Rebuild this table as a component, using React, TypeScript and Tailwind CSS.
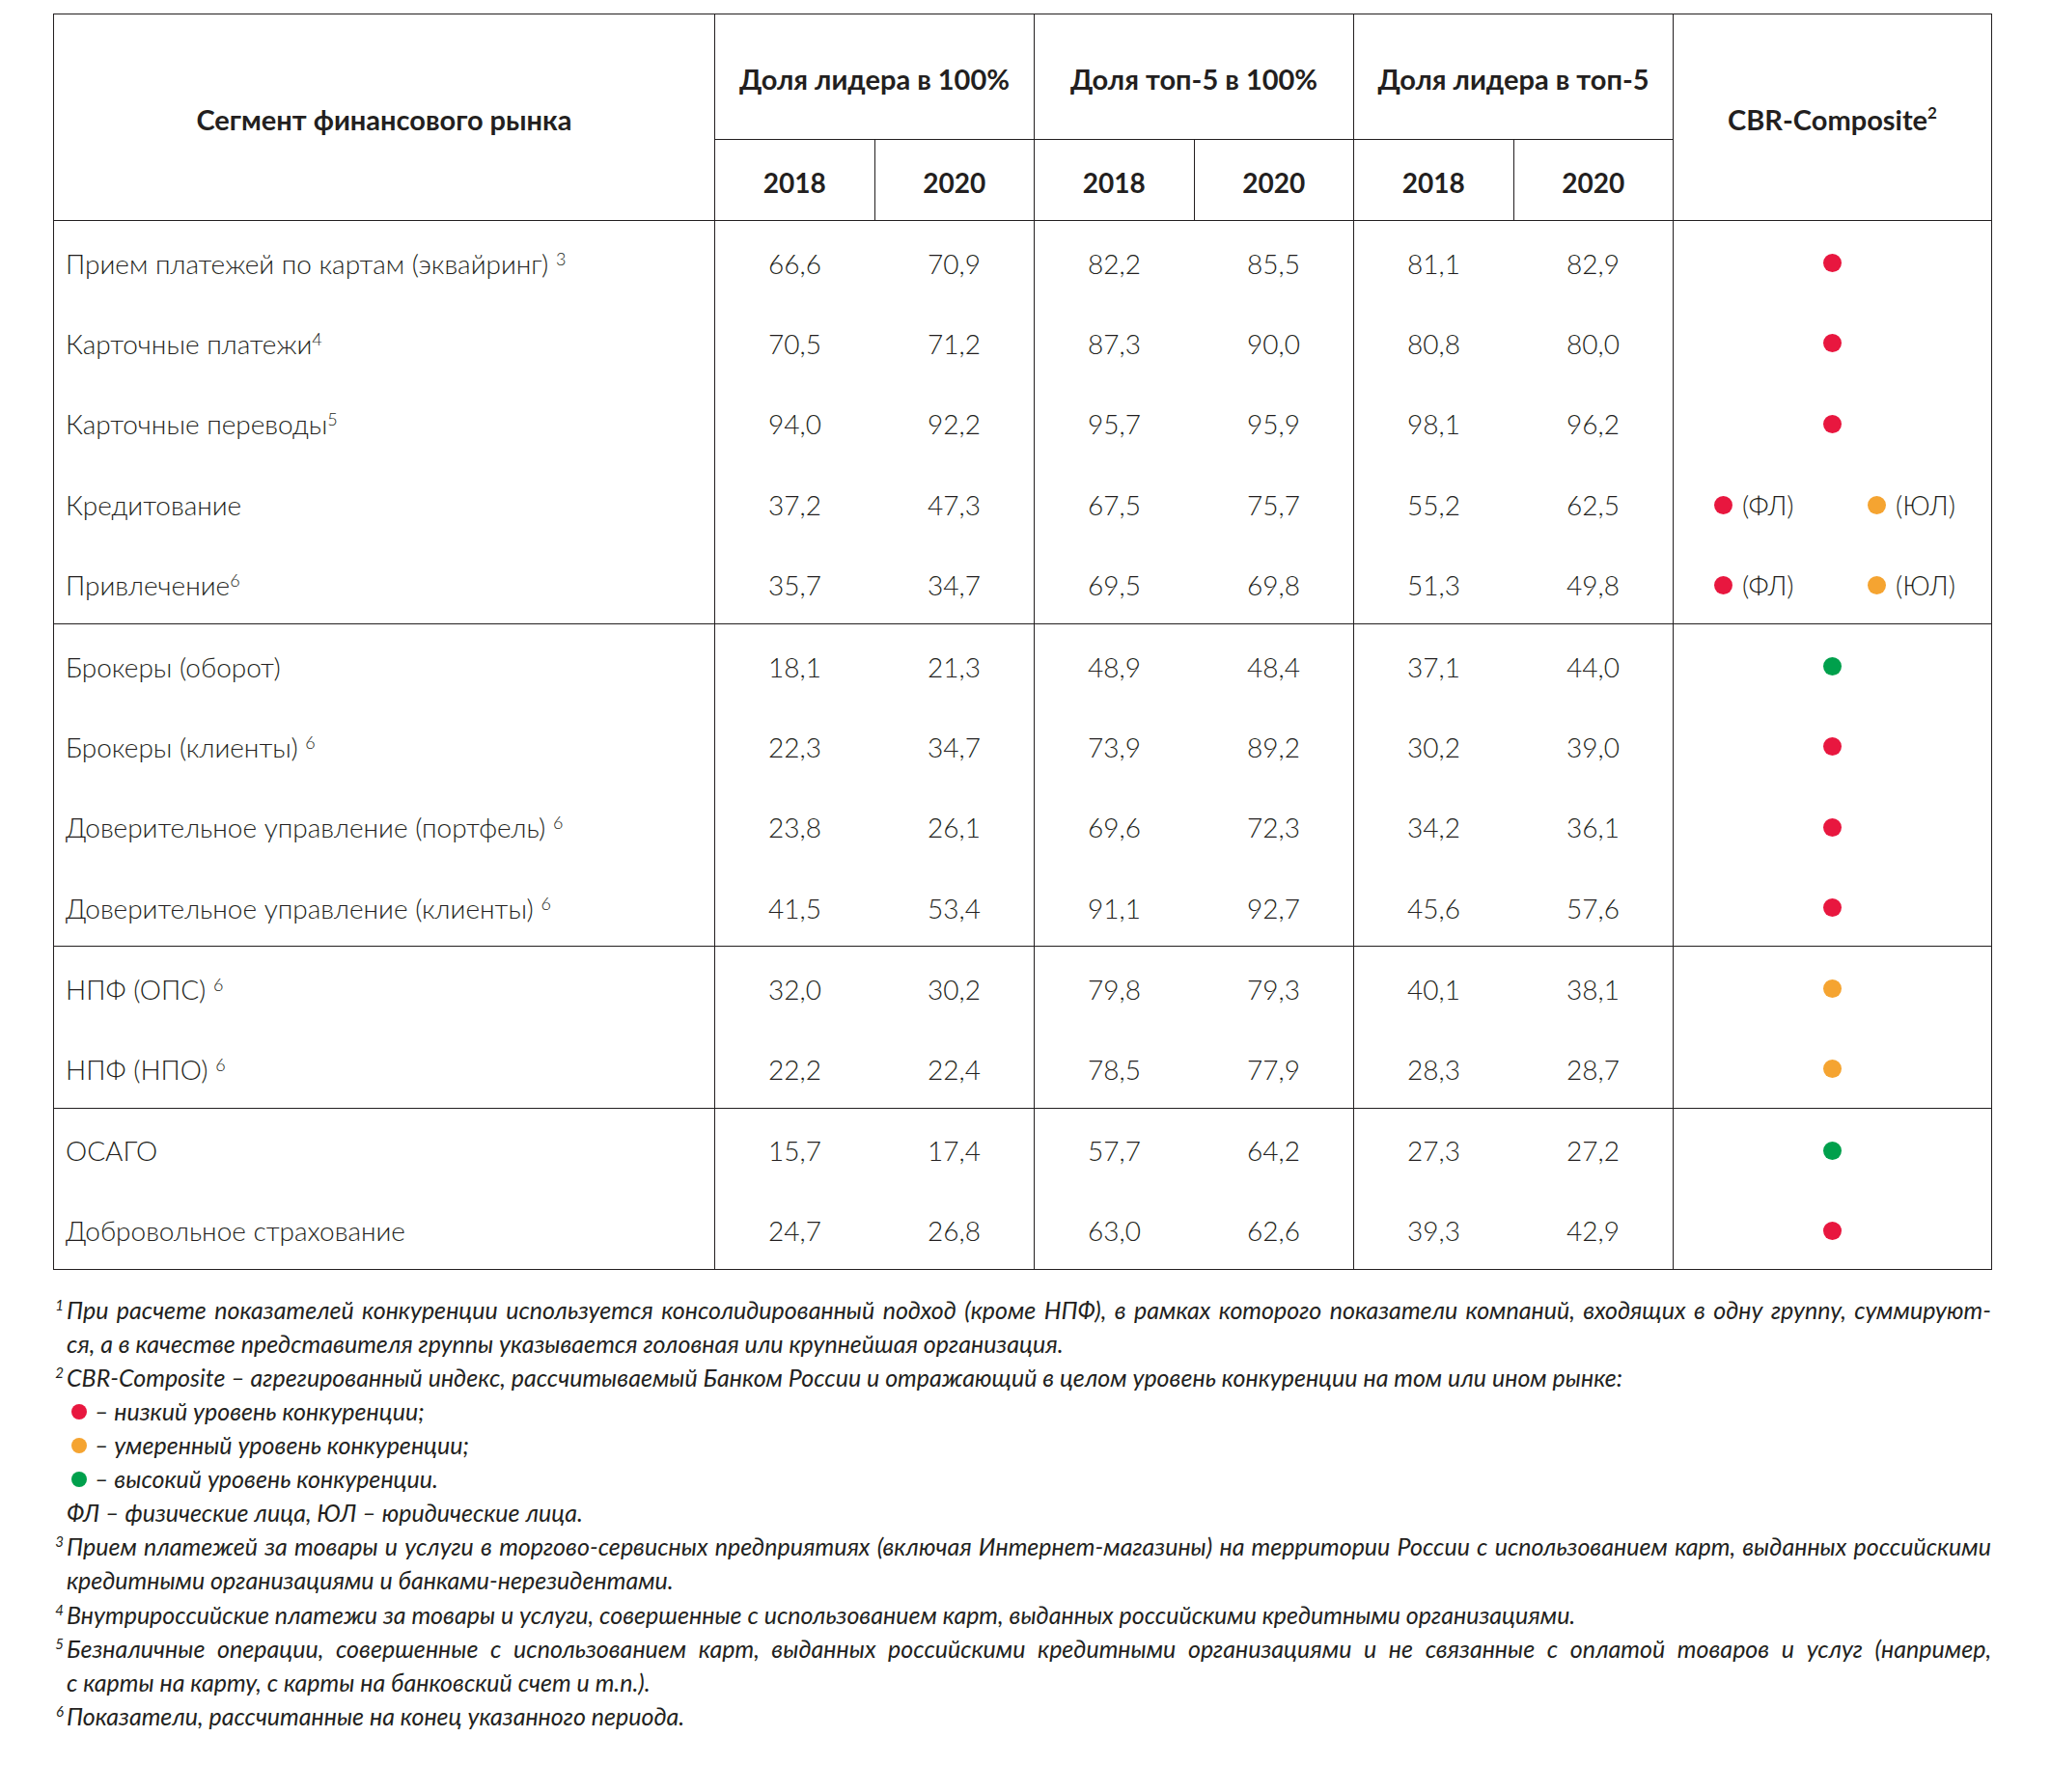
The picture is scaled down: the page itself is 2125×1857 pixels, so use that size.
import React from "react";

type Comp = "red" | "orange" | "green" | "split";

type Row = {
  label: string;
  sup?: string;
  supSpace?: boolean;
  v: string[];
  c: Comp;
};

const groups: Row[][] = [
  [
    { label: "Прием платежей по картам (эквайринг)", sup: "3", supSpace: true, v: ["66,6", "70,9", "82,2", "85,5", "81,1", "82,9"], c: "red" },
    { label: "Карточные платежи", sup: "4", v: ["70,5", "71,2", "87,3", "90,0", "80,8", "80,0"], c: "red" },
    { label: "Карточные переводы", sup: "5", v: ["94,0", "92,2", "95,7", "95,9", "98,1", "96,2"], c: "red" },
    { label: "Кредитование", v: ["37,2", "47,3", "67,5", "75,7", "55,2", "62,5"], c: "split" },
    { label: "Привлечение", sup: "6", v: ["35,7", "34,7", "69,5", "69,8", "51,3", "49,8"], c: "split" },
  ],
  [
    { label: "Брокеры (оборот)", v: ["18,1", "21,3", "48,9", "48,4", "37,1", "44,0"], c: "green" },
    { label: "Брокеры (клиенты)", sup: "6", supSpace: true, v: ["22,3", "34,7", "73,9", "89,2", "30,2", "39,0"], c: "red" },
    { label: "Доверительное управление (портфель)", sup: "6", supSpace: true, v: ["23,8", "26,1", "69,6", "72,3", "34,2", "36,1"], c: "red" },
    { label: "Доверительное управление (клиенты)", sup: "6", supSpace: true, v: ["41,5", "53,4", "91,1", "92,7", "45,6", "57,6"], c: "red" },
  ],
  [
    { label: "НПФ (ОПС)", sup: "6", supSpace: true, v: ["32,0", "30,2", "79,8", "79,3", "40,1", "38,1"], c: "orange" },
    { label: "НПФ (НПО)", sup: "6", supSpace: true, v: ["22,2", "22,4", "78,5", "77,9", "28,3", "28,7"], c: "orange" },
  ],
  [
    { label: "ОСАГО", v: ["15,7", "17,4", "57,7", "64,2", "27,3", "27,2"], c: "green" },
    { label: "Добровольное страхование", v: ["24,7", "26,8", "63,0", "62,6", "39,3", "42,9"], c: "red" },
  ],
];

function Dot({ color, small }: { color: "red" | "orange" | "green"; small?: boolean }) {
  const bg = color === "red" ? "bg-[#e8173f]" : color === "orange" ? "bg-[#f5a431]" : "bg-[#00a04c]";
  const size = small ? "w-[16px] h-[16px]" : "w-[19px] h-[19px]";
  return <span className={`inline-block shrink-0 rounded-full ${size} ${bg}`} />;
}

function CompCell({ c }: { c: Comp }) {
  if (c === "split") {
    return (
      <div className="flex items-center justify-between pl-[42px] pr-[37px]">
        <span className="flex items-center gap-[10px]">
          <Dot color="red" />
          <span>(ФЛ)</span>
        </span>
        <span className="flex items-center gap-[10px]">
          <Dot color="orange" />
          <span>(ЮЛ)</span>
        </span>
      </div>
    );
  }
  return (
    <div className="flex items-center justify-center">
      <Dot color={c} />
    </div>
  );
}

const B = "border-[#231f20]";

function FootLine({ sup, children, justify }: { sup?: string; children: React.ReactNode; justify?: boolean }) {
  return (
    <div className="flex h-[35.1px] items-center">
      <span className="w-[14px] shrink-0 self-start pr-[3px] text-right">
        {sup ? <span className="relative top-[-9px] text-[15px] leading-none">{sup}</span> : null}
      </span>
      <span className={`flex-1 ${justify ? "text-justify [text-align-last:justify]" : ""}`}>{children}</span>
    </div>
  );
}

export default function App() {
  return (
    <div className="min-h-[1857px] w-[2125px] bg-white pl-[55px] pt-[14px] text-[#231f20] [font-family:Lato,'Noto_Sans',sans-serif]">
      <table className={`w-[2008px] table-fixed border-collapse border ${B} text-[28px] font-light`}>
        <colgroup>
          <col className="w-[685px]" />
          <col className="w-[165.5px]" />
          <col className="w-[165.5px]" />
          <col className="w-[165.5px]" />
          <col className="w-[165.5px]" />
          <col className="w-[165.5px]" />
          <col className="w-[165.5px]" />
          <col className="w-[330px]" />
        </colgroup>
        <thead>
          <tr className="h-[130px]">
            <th rowSpan={2} className={`border ${B} pt-[4px] text-center text-[29px] font-bold`}>
              Сегмент финансового рынка
            </th>
            <th colSpan={2} className={`border ${B} pt-[4px] text-center text-[29px] font-bold`}>
              Доля лидера в 100%
            </th>
            <th colSpan={2} className={`border ${B} pt-[4px] text-center text-[29px] font-bold`}>
              Доля топ-5 в 100%
            </th>
            <th colSpan={2} className={`border ${B} pt-[4px] text-center text-[29px] font-bold`}>
              Доля лидера в топ-5
            </th>
            <th rowSpan={2} className={`border ${B} pt-[4px] text-center text-[29px] font-bold`}>
              CBR-Composite<sup className="relative top-[-12px] text-[17px] leading-none">2</sup>
            </th>
          </tr>
          <tr className="h-[84px]">
            {["2018", "2020", "2018", "2020", "2018", "2020"].map((y, i) => (
              <th key={i} className={`border ${B} pt-[4px] text-center text-[28px] font-bold`}>
                {y}
              </th>
            ))}
          </tr>
        </thead>
        {groups.map((g, gi) => (
          <tbody key={gi} className={`border-t ${B}`}>
            {g.map((r, ri) => (
              <tr key={ri} className="h-[83.6px]">
                <td className={`border-r ${B} pl-[12px] pt-[4px] text-left`}>
                  {r.label}
                  {r.sup ? (
                    <>
                      {r.supSpace ? " " : ""}
                      <sup className="relative top-[-9px] text-[18px] leading-none">{r.sup}</sup>
                    </>
                  ) : null}
                </td>
                {r.v.map((val, vi) => (
                  <td key={vi} className={`pt-[4px] text-center ${vi % 2 === 1 ? `border-r ${B}` : ""}`}>
                    {val}
                  </td>
                ))}
                <td className="pt-[4px]">
                  <CompCell c={r.c} />
                </td>
              </tr>
            ))}
          </tbody>
        ))}
      </table>

      <div className="mt-[24px] w-[2008px] text-[25px] italic leading-[35.1px]">
        <FootLine sup="1" justify>
          При расчете показателей конкуренции используется консолидированный подход (кроме НПФ), в рамках которого показатели компаний, входящих в одну группу, суммируют-
        </FootLine>
        <FootLine>ся, а в качестве представителя группы указывается головная или крупнейшая организация.</FootLine>
        <FootLine sup="2">
          CBR-Composite – агрегированный индекс, рассчитываемый Банком России и отражающий в целом уровень конкуренции на том или ином рынке:
        </FootLine>
        <FootLine>
          <span className="flex items-center gap-[8px] pl-[5px]">
            <Dot color="red" small />
            <span>– низкий уровень конкуренции;</span>
          </span>
        </FootLine>
        <FootLine>
          <span className="flex items-center gap-[8px] pl-[5px]">
            <Dot color="orange" small />
            <span>– умеренный уровень конкуренции;</span>
          </span>
        </FootLine>
        <FootLine>
          <span className="flex items-center gap-[8px] pl-[5px]">
            <Dot color="green" small />
            <span>– высокий уровень конкуренции.</span>
          </span>
        </FootLine>
        <FootLine>ФЛ – физические лица, ЮЛ – юридические лица.</FootLine>
        <FootLine sup="3" justify>
          Прием платежей за товары и услуги в торгово-сервисных предприятиях (включая Интернет-магазины) на территории России с использованием карт, выданных российскими
        </FootLine>
        <FootLine>кредитными организациями и банками-нерезидентами.</FootLine>
        <FootLine sup="4">
          Внутрироссийские платежи за товары и услуги, совершенные с использованием карт, выданных российскими кредитными организациями.
        </FootLine>
        <FootLine sup="5" justify>
          Безналичные операции, совершенные с использованием карт, выданных российскими кредитными организациями и не связанные с оплатой товаров и услуг (например,
        </FootLine>
        <FootLine>с карты на карту, с карты на банковский счет и т.п.).</FootLine>
        <FootLine sup="6">Показатели, рассчитанные на конец указанного периода.</FootLine>
      </div>
    </div>
  );
}
